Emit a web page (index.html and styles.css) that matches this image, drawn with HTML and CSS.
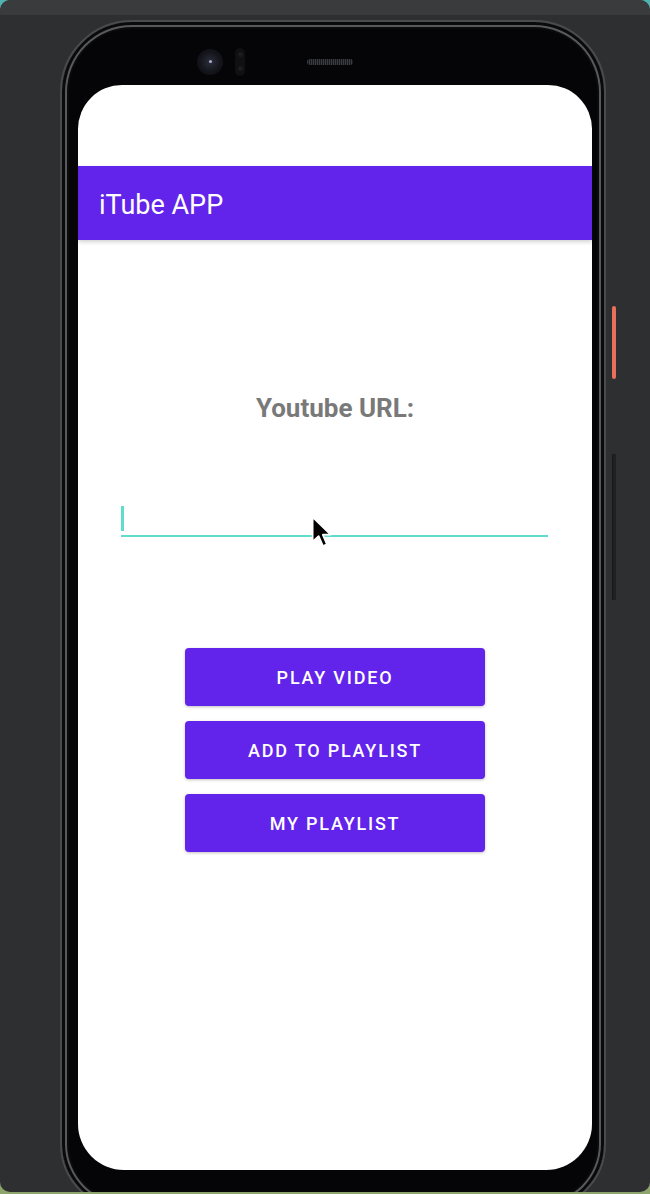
FILE: index.html
```html
<!DOCTYPE html>
<html>
<head>
<meta charset="utf-8">
<link rel="stylesheet" href="styles.css">
</head>
<body>
<div class="window">
  <div class="topstrip"></div>
  <div class="phone">
    <div class="btn-power"></div>
    <div class="btn-volume"></div>
    <div class="bezel-top">
      <div class="camera"><div class="lens"></div></div>
      <div class="sensor"><span></span><span></span></div>
      <div class="speaker"></div>
    </div>
    <div class="screen">
      <div class="statusbar"></div>
      <div class="appbar">iTube APP</div>
      <div class="content">
        <div class="label">Youtube URL:</div>
        <div class="field"><span class="caret"></span></div>
        <div class="buttons">
          <div class="btn">PLAY VIDEO</div>
          <div class="btn">ADD TO PLAYLIST</div>
          <div class="btn">MY PLAYLIST</div>
        </div>
        <svg class="pointer" width="24" height="36" viewBox="0 0 22 32">
          <path d="M1.5 1.5 L1.5 24 L7 18.8 L11 28 L14.6 26.4 L10.8 17.6 L18 17.6 Z" fill="#000" stroke="#fff" stroke-width="1.6" stroke-linejoin="round"/>
        </svg>
      </div>
    </div>
  </div>
</div>
</body>
</html>
```
FILE: styles.css
```css
html, body {
  margin: 0;
  padding: 0;
}
body {
  width: 650px;
  height: 1194px;
  overflow: hidden;
  background: linear-gradient(180deg, #4fb3b0 0%, #3d6f6a 50%, #8fa56e 100%);
  font-family: Roboto, "Noto Sans", sans-serif;
}
.window {
  position: relative;
  width: 650px;
  height: 1192px;
  box-sizing: border-box;
  border-radius: 10px;
  background: #2e2f31;
  padding: 20px 0 0 60px;
  overflow: hidden;
}
.topstrip {
  position: absolute;
  left: 0;
  top: 0;
  right: 0;
  height: 15px;
  background: #3a3b3d;
  border-radius: 10px 10px 0 0;
}
.phone {
  position: relative;
  width: 546px;
  height: 1190px;
  box-sizing: border-box;
  background: #050507;
  border-radius: 72px 72px 66px 66px;
  border: 2px solid #4a4b4e;
  box-shadow: inset 0 0 0 3px #0a0a0c, inset 0 0 0 5px #58595c, inset 0 0 0 7px #0b0b0d;
  padding: 0 0 0 16px;
}
.btn-power {
  position: absolute;
  left: 550px;
  top: 284px;
  width: 4px;
  height: 73px;
  border-radius: 2px;
  background: #e8705a;
}
.btn-volume {
  position: absolute;
  left: 550px;
  top: 432px;
  width: 3px;
  height: 146px;
  background: #1f2022;
  border-left: 1px solid #17181a;
}
.bezel-top {
  height: 63px;
  display: flex;
  align-items: center;
  padding-left: 119px;
  padding-top: 16px;
  box-sizing: border-box;
  position: relative;
}
.camera {
  width: 26px;
  height: 26px;
  border-radius: 50%;
  background: radial-gradient(circle at 50% 50%, #2b2d3a 0%, #14151b 55%, #0b0b0f 100%);
  display: flex;
  align-items: center;
  justify-content: center;
}
.lens {
  width: 3px;
  height: 3px;
  border-radius: 50%;
  background: #a8b0d0;
}
.sensor {
  margin-left: 12px;
  width: 10px;
  height: 28px;
  border-radius: 5px;
  background: #101013;
  display: flex;
  flex-direction: column;
  align-items: center;
  justify-content: space-around;
}
.sensor span {
  width: 5px;
  height: 5px;
  border-radius: 50%;
  background: #1b1c20;
}
.speaker {
  margin-left: 62px;
  width: 46px;
  height: 6px;
  border-radius: 3px;
  background: repeating-linear-gradient(90deg, #3a3b40 0 1px, #1a1b1e 1px 2px);
}
.screen {
  width: 514px;
  height: 1085px;
  background: #ffffff;
  border-radius: 44px 44px 46px 46px;
  overflow: hidden;
  position: relative;
}
.statusbar {
  height: 81px;
}
.appbar {
  height: 74px;
  background: #6224ea;
  color: #ffffff;
  font-size: 27px;
  font-weight: 400;
  line-height: 78px;
  padding-left: 21px;
  box-shadow: 0 2px 4px rgba(0,0,0,0.18);
  position: relative;
}
.content {
  display: flex;
  flex-direction: column;
  align-items: center;
  position: relative;
}
.label {
  margin-top: 153px;
  font-size: 26px;
  line-height: 30px;
  font-weight: 700;
  color: #797979;
}
.field {
  margin-top: 77px;
  width: 427px;
  height: 31px;
  border-bottom: 2.5px solid #5fdccb;
  display: flex;
  align-items: flex-end;
  padding-bottom: 4px;
  box-sizing: content-box;
  margin-left: -1px;
}
.caret {
  width: 2.5px;
  height: 25px;
  background: #5fdccb;
}
.buttons {
  margin-top: 111px;
  display: flex;
  flex-direction: column;
  gap: 15px;
}
.btn {
  width: 300px;
  height: 58px;
  border-radius: 4px;
  background: #6224ea;
  color: #ffffff;
  font-size: 18px;
  font-weight: 500;
  letter-spacing: 1.8px;
  display: flex;
  align-items: center;
  justify-content: center;
  box-shadow: 0 1px 3px rgba(0,0,0,0.25);
}
.pointer {
  position: absolute;
  left: 233px;
  top: 275px;
}
```
